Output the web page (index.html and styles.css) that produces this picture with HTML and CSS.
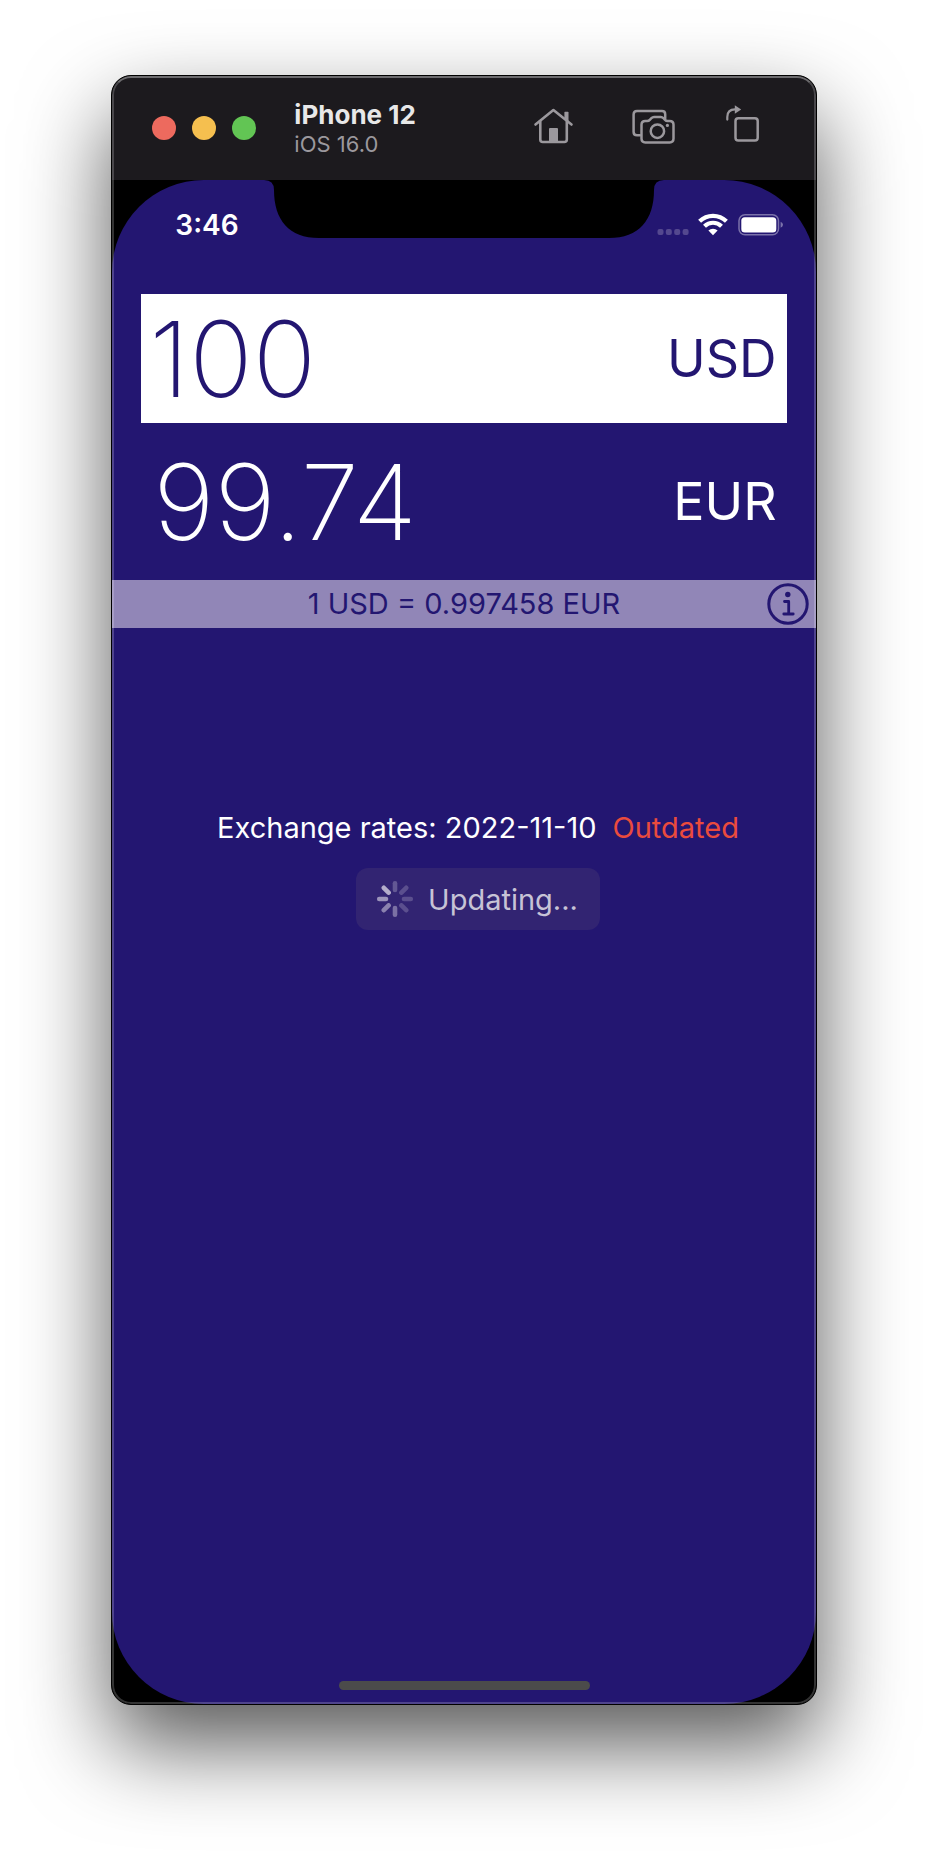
FILE: index.html
```html
<!DOCTYPE html>
<html lang="en">
<head>
<meta charset="utf-8">
<meta name="viewport" content="width=device-width, initial-scale=1">
<title>iPhone 12 – iOS 16.0</title>
<link rel="stylesheet" href="styles.css">
</head>
<body>
<div class="device">
  <header class="titlebar">
    <div class="lights">
      <button class="light light-close" type="button" aria-label="Close"></button>
      <button class="light light-minimize" type="button" aria-label="Minimize"></button>
      <button class="light light-zoom" type="button" aria-label="Zoom"></button>
    </div>
    <div class="title">
      <h1 class="title-name">iPhone 12</h1>
      <p class="title-os">iOS 16.0</p>
    </div>
    <div class="tools">
      <button class="tool" type="button" aria-label="Home">
        <svg width="50" height="48" viewBox="0 0 50 48" fill="none" stroke="currentColor" stroke-width="2.6" stroke-linecap="round" stroke-linejoin="round">
          <path d="M3.5 20.5 21.4 6 39.5 20.5"/>
          <path d="M8.3 17.5V35.5Q8.3 38 10.8 38H32.3Q34.8 38 34.8 35.5V17.5"/>
          <path d="M32.4 8.4q0-.6.6-.6h2.9q.6 0 .6.6V18l-4.1-3.4Z" fill="currentColor" stroke="none"/>
          <path d="M17 25q0-1 1-1h7q1 0 1 1v13h-9Z" fill="currentColor" stroke="none"/>
        </svg>
      </button>
      <button class="tool" type="button" aria-label="Screenshot">
        <svg width="44" height="48" viewBox="0 0 44 48" fill="none" stroke="currentColor" stroke-width="2.5" stroke-linecap="round" stroke-linejoin="round">
          <path d="M8 31.3H5Q1.6 31.3 1.6 28V10.5Q1.6 7 5 7H30Q33.2 7 33.2 10.2V14.5"/>
          <path d="M9.500 20.800Q9.500 17 13.300 17H15.200Q16.700 17 17.800 15.800L19.400 14.200Q20.600 13 22 13H28.800Q30.200 13 31.400 14.200L33 15.800Q34.100 17 35.600 17H37.700Q41.500 17 41.500 20.800V34.600Q41.500 38.400 37.700 38.400H13.300Q9.500 38.400 9.500 34.600Z"/>
          <circle cx="25.400" cy="27.200" r="6.700"/>
          <circle cx="35.400" cy="21.400" r="1.600" fill="currentColor" stroke="none"/>
        </svg>
      </button>
      <button class="tool" type="button" aria-label="Rotate">
        <svg width="36" height="48" viewBox="0 0 36 48" fill="none" stroke="currentColor" stroke-width="2.500" stroke-linecap="round">
          <rect x="9.500" y="14.200" width="22.200" height="22.400" rx="2.800"/>
          <path d="M1.300 15.600V13Q1.300 5.400 9 5.400" stroke-width="2.200"/>
          <path d="M8.800 1.200 15.200 5.500 8.800 9.800Z" fill="currentColor" stroke="none"/>
        </svg>
      </button>
    </div>
  </header>

  <main class="bezel">
    <div class="screen">
      <div class="status">
        <time class="clock">3:46</time>
        <svg class="notch" width="400" height="58" viewBox="0 0 400 58" aria-hidden="true">
          <path d="M0 0H400Q390 0 390 10C390 40 375 58 345 58H55C25 58 10 40 10 10Q10 0 0 0Z"/>
        </svg>
        <svg width="127" height="24" viewBox="0 0 127 24" role="img" aria-label="Wi-Fi connected, battery full">
          <g fill="#54488f">
            <rect x="0.500" y="16" width="6" height="6" rx="2"/>
            <rect x="8.800" y="16" width="6" height="6" rx="2"/>
            <rect x="17.200" y="16" width="6" height="6" rx="2"/>
            <rect x="25.600" y="16" width="6" height="6" rx="2"/>
          </g>
          <g fill="none" stroke="#fff" stroke-width="4.200">
            <path d="M42.600 8.200A19.300 19.300 0 0 1 69.400 8.200"/>
            <path d="M47.500 13.200A12.200 12.200 0 0 1 64.500 13.200"/>
          </g>
          <path d="M56 22.200 51.400 17.500A6.600 6.600 0 0 1 60.600 17.500Z" fill="#fff"/>
          <rect x="82" y="1.800" width="39.500" height="20" rx="6" fill="none" stroke="#7b72aa" stroke-width="1.500"/>
          <rect x="84.300" y="4.200" width="35" height="15.300" rx="3.500" fill="#fff"/>
          <path d="M123.600 8.800Q126 9.600 126 11.800T123.600 14.800Z" fill="#7b72aa"/>
        </svg>
      </div>

      <div class="row row-active">
        <input class="amount" id="amount" type="text" inputmode="decimal" value="100" aria-label="Amount in USD">
        <button class="currency" type="button">USD</button>
      </div>
      <div class="row">
        <output class="amount amount-result" for="amount">99.74</output>
        <button class="currency" type="button">EUR</button>
      </div>

      <div class="rate">
        <span class="rate-text">1 USD = 0.997458 EUR</span>
        <button class="info" type="button" aria-label="Information">
          <svg width="42" height="42" viewBox="0 0 42 42" fill="none" stroke="currentColor" stroke-width="3">
            <circle cx="21" cy="21" r="19.200"/>
            <circle cx="20.800" cy="11.500" r="2.700" fill="currentColor" stroke="none"/>
            <path d="M17.500 18.500H21.700V31M16.800 31H26.200" stroke-linecap="round" stroke-linejoin="round" stroke-width="2.800"/>
          </svg>
        </button>
      </div>

      <section class="updates">
        <p class="updates-line">Exchange rates: 2022-11-10 <span class="outdated">Outdated</span></p>
        <button class="updating" type="button" disabled>
          <svg width="38" height="38" viewBox="0 0 38 38" stroke="#d5d0e2" stroke-width="4.600" stroke-linecap="round">
            <path d="M19 3.200V10" opacity=".3"/>
            <path d="M30.200 7.800 25.400 12.600" opacity=".25"/>
            <path d="M34.800 19H28" opacity=".25"/>
            <path d="M30.200 30.200 25.400 25.400" opacity=".25"/>
            <path d="M19 34.800V28" opacity=".45"/>
            <path d="M7.800 30.200 12.600 25.400" opacity=".55"/>
            <path d="M3.200 19H10" opacity=".65"/>
            <path d="M7.800 7.800 12.600 12.600" opacity=".8"/>
          </svg>
          Updating...
        </button>
      </section>

      <div class="home-indicator"></div>
    </div>
  </main>
</div>
</body>
</html>
```

FILE: styles.css
```css
:root {
  --navy: #231671;
  --bar: #1c1a1e;
  --icon: #9b989d;
}

* {
  box-sizing: border-box;
}

body {
  margin: 0;
  min-height: 100vh;
  padding: 75px 12% 147px;
  display: flex;
  flex-direction: column;
  background: #fff;
  font-family: Inter, "Liberation Sans", sans-serif;
  color: #fff;
}

h1,
p {
  margin: 0;
}

button {
  padding: 0;
  border: 0;
  background: none;
  color: inherit;
  font: inherit;
}

svg {
  display: block;
}

.device {
  position: relative;
  flex: 1;
  display: flex;
  flex-direction: column;
  border: 1px solid #000;
  border-radius: 20px;
  overflow: hidden;
  background: #000;
  box-shadow: 0 40px 88px rgba(0, 0, 0, 0.66);
}

/* light rim just inside the window edge */
.device::after {
  content: "";
  position: absolute;
  inset: 0;
  border: 2px solid rgba(255, 255, 255, 0.2);
  border-top-color: rgba(255, 255, 255, 0.36);
  border-radius: 19px;
  pointer-events: none;
}

.titlebar {
  display: flex;
  align-items: center;
  height: 104px;
  padding: 0 54px 0 40px;
  background: var(--bar);
}

.lights {
  display: flex;
  gap: 16px;
}

.light {
  width: 24px;
  height: 24px;
  border-radius: 50%;
}

.light-close {
  background: #ed6a5e;
}

.light-minimize {
  background: #f5bf4f;
}

.light-zoom {
  background: #62c554;
}

.title {
  margin-left: 38px;
  padding-top: 2px;
}

.title-name {
  font-size: 26px;
  line-height: 30px;
  font-weight: 700;
  color: #e8e8e8;
}

.title-os {
  font-size: 22px;
  line-height: 28px;
  color: var(--icon);
}

.tools {
  display: flex;
  gap: 50px;
  margin-left: auto;
  color: var(--icon);
}

.bezel {
  flex: 1;
  display: flex;
}

.screen {
  flex: 1;
  min-width: 0;
  display: flex;
  flex-direction: column;
  border-radius: 92px;
  background: var(--navy);
}

.status {
  position: relative;
  display: flex;
  align-items: center;
  justify-content: space-between;
  height: 90px;
  margin-bottom: 24px;
  padding: 0 32px 0 63px;
}

.clock {
  font-size: 28px;
  font-weight: 600;
}

.notch {
  position: absolute;
  top: 0;
  left: 50%;
  margin-left: -200px;
}

.row {
  display: flex;
  align-items: center;
  height: 129px;
  margin: 0 29px 14px;
  padding: 0 10px 0 12px;
}

.row-active {
  padding-left: 8px;
  background: #fff;
  color: var(--navy);
}

.amount {
  flex: 1;
  min-width: 0;
  padding: 0;
  border: 0;
  background: none;
  color: inherit;
  font-family: inherit;
  font-size: 105px;
  line-height: 128px;
  font-weight: 200;
}

.currency {
  font-size: 52px;
  line-height: 64px;
}

.rate {
  display: grid;
  grid-template-columns: 1fr auto 1fr;
  align-items: center;
  height: 48px;
  padding: 0 7px;
  background: #9186b7;
  color: var(--navy);
}

.rate-text {
  grid-column: 2;
  font-size: 29px;
  line-height: 36px;
}

.info {
  justify-self: end;
}

.updates {
  display: flex;
  flex-direction: column;
  align-items: center;
  gap: 20px;
  margin-top: 180px;
  padding-left: 28px;
}

.updates-line {
  display: flex;
  gap: 16px;
  font-size: 29px;
  line-height: 40px;
}

.outdated {
  color: #ea4b3d;
}

.updating {
  display: flex;
  align-items: center;
  gap: 14px;
  height: 62px;
  padding: 0 22px 0 20px;
  border-radius: 12px;
  background: #322472;
  color: #c7c3d6;
  font-size: 29px;
}

.home-indicator {
  width: 251px;
  height: 9px;
  margin: auto auto 14px;
  border-radius: 5px;
  background: #4b4b4b;
}
```
